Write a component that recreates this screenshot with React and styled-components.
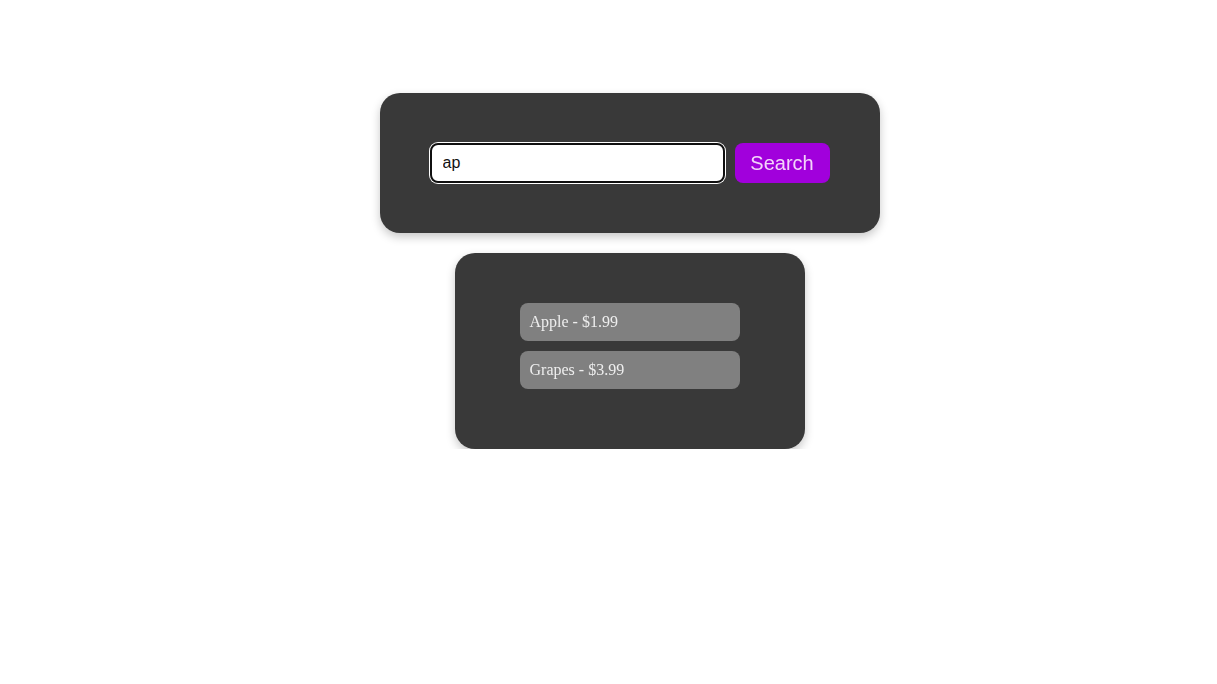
import React, { useState } from 'react';
import styled, { createGlobalStyle } from 'styled-components';

const GlobalStyle = createGlobalStyle`
  body {
    margin: 0;
    background: #ffffff;
    font-family: "Liberation Serif", "Times New Roman", serif;
  }
`;

const Page = styled.div`
  display: flex;
  flex-direction: column;
  align-items: center;
  gap: 20px;
  padding: 93px 0 0 42px;
`;

const Panel = styled.div`
  box-sizing: border-box;
  width: ${(p) => p.width}px;
  padding: 50px;
  background: #393939;
  border-radius: 20px;
  box-shadow: 0 4px 10px rgba(0, 0, 0, 0.22);
`;

const SearchRow = styled.form`
  display: flex;
  gap: 10px;
  margin: 0;
`;

const SearchInput = styled.input`
  box-sizing: border-box;
  width: 295px;
  height: 40px;
  padding: 0 11px;
  border: 2px solid #101010;
  border-radius: 8px;
  background: #ffffff;
  color: #111;
  font-family: "Liberation Sans", Arial, sans-serif;
  font-size: 16px;
  box-shadow: 0 0 0 1px #ffffff;

  &:focus {
    outline: none;
  }
`;

const SearchButton = styled.button`
  box-sizing: border-box;
  width: 95px;
  height: 40px;
  border: none;
  border-radius: 8px;
  background: #a100dc;
  color: #f3d4fa;
  font-family: "Liberation Sans", Arial, sans-serif;
  font-size: 20px;
  cursor: pointer;
`;

const ResultList = styled.ul`
  list-style: none;
  margin: 0;
  padding: 0 15px;
`;

const ResultItem = styled.li`
  box-sizing: border-box;
  height: 38px;
  margin-bottom: 10px;
  padding: 0 10px;
  display: flex;
  align-items: center;
  background: #808080;
  border-radius: 8px;
  color: #eeeeee;
  font-size: 16px;
`;

const products = [
  { name: 'Apple', price: 1.99 },
  { name: 'Banana', price: 0.99 },
  { name: 'Grapes', price: 3.99 },
];

export default function App() {
  const [query, setQuery] = useState('ap');
  const results = products.filter((p) =>
    p.name.toLowerCase().includes(query.toLowerCase())
  );

  return (
    <>
      <GlobalStyle />
      <Page>
        <Panel width={500}>
          <SearchRow onSubmit={(e) => e.preventDefault()}>
            <SearchInput
              autoFocus
              value={query}
              onChange={(e) => setQuery(e.target.value)}
            />
            <SearchButton type="submit">Search</SearchButton>
          </SearchRow>
        </Panel>
        <Panel width={350}>
          <ResultList>
            {results.map((p) => (
              <ResultItem key={p.name}>
                {p.name} - ${p.price}
              </ResultItem>
            ))}
          </ResultList>
        </Panel>
      </Page>
    </>
  );
}
